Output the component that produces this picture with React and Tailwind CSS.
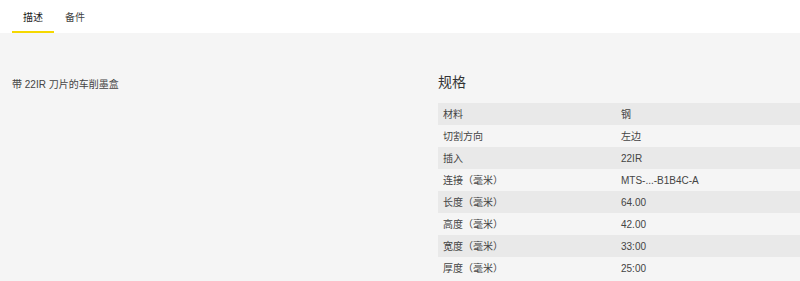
export default function App() {
  const rows = [
    ["材料", "钢"],
    ["切割方向", "左边"],
    ["插入", "22IR"],
    ["连接（毫米）", "MTS-...-B1B4C-A"],
    ["长度（毫米）", "64.00"],
    ["高度（毫米）", "42.00"],
    ["宽度（毫米）", "33:00"],
    ["厚度（毫米）", "25:00"],
  ];
  const font = { fontFamily: '"Liberation Sans", "Noto Sans CJK SC", sans-serif' };
  return (
    <div className="w-[800px] h-[281px] bg-[#f5f5f5] overflow-hidden text-[#333]" style={font}>
      <div className="h-[33px] bg-white flex pl-3">
        <div className="px-[11px] flex items-center text-[10px] text-[#222] border-b-2 border-[#f5d800] pt-[4px]">描述</div>
        <div className="px-[11px] flex items-center text-[10px] text-[#444] border-b-2 border-transparent pt-[4px]">备件</div>
      </div>
      <div className="flex">
        <div className="w-[438px] shrink-0 pl-3 pt-[45px] text-[10px] leading-[14px] text-[#444]">
          带 22IR 刀片的车削墨盒
        </div>
        <div className="flex-1">
          <div className="pt-[39px] text-[14px] leading-[20px] text-[#333]">规格</div>
          <div className="mt-[11px]">
            {rows.map(([k, v], i) => (
              <div
                key={k}
                className={`flex h-[22px] items-center text-[10px] text-[#444] ${i % 2 === 0 ? "bg-[#e9e9e9]" : "bg-[#f5f5f5]"}`}
              >
                <div className="w-[179px] pl-[5px]">{k}</div>
                <div className="flex-1 pl-[4px]">{v}</div>
              </div>
            ))}
          </div>
        </div>
      </div>
    </div>
  );
}
